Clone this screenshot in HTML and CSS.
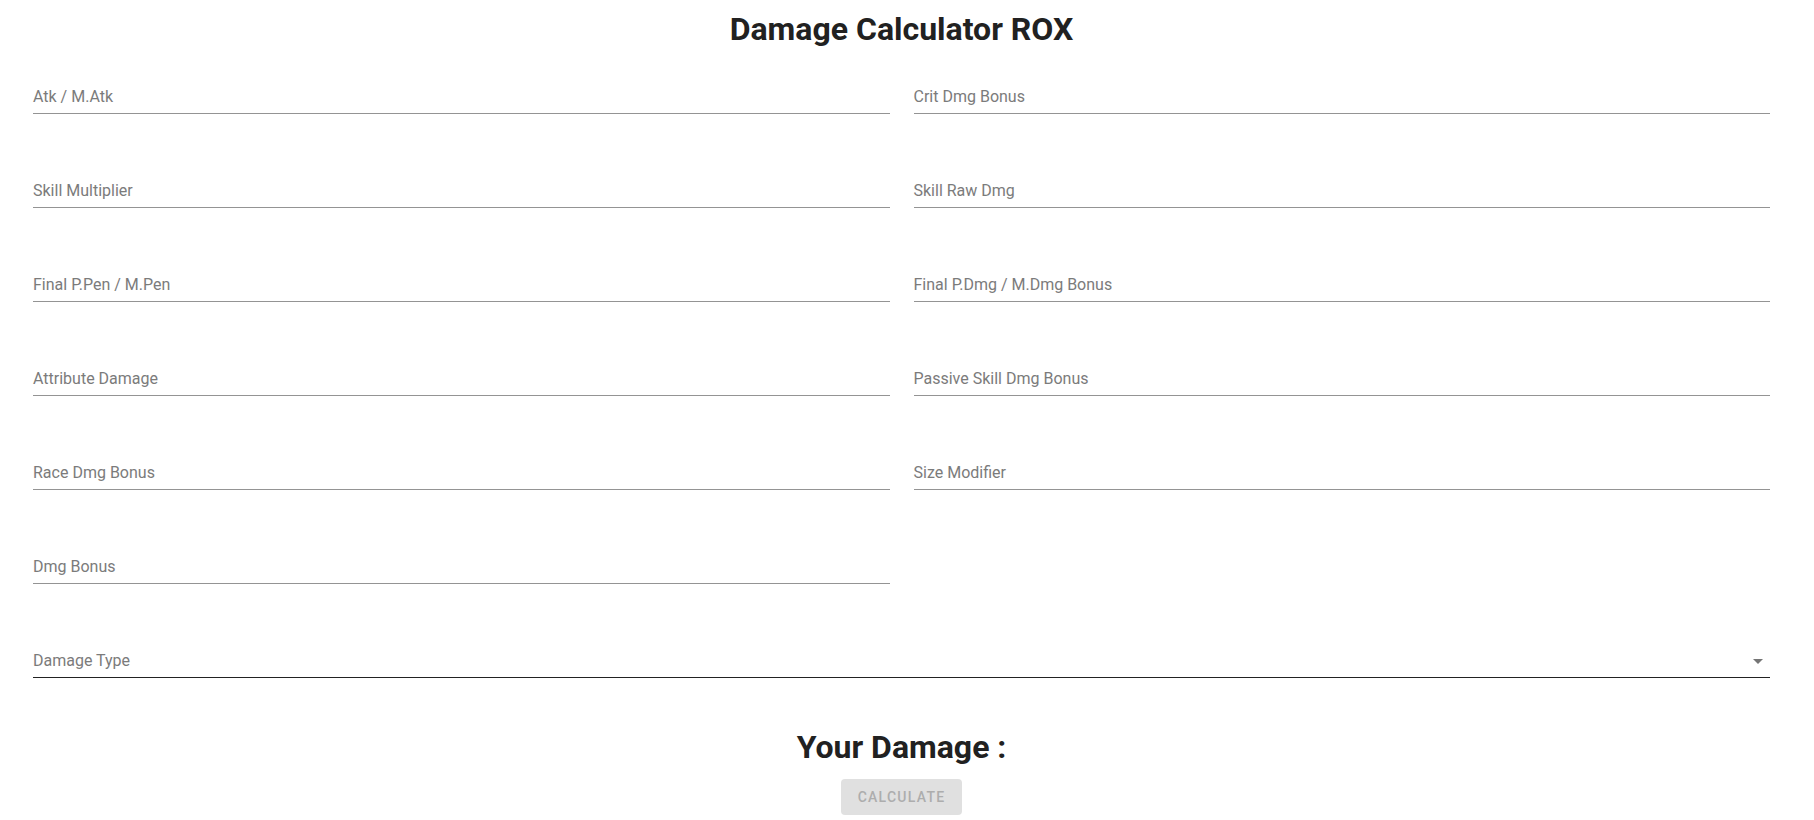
FILE: index.html
```html
<!DOCTYPE html>
<html lang="en">
<head>
    <meta charset="UTF-8">
    <meta name="viewport" content="width=device-width, initial-scale=1.0">
    <title>Damage Calculator ROX</title>
    <link rel="stylesheet" href="styles.css">
</head>
<body>

    <div class="calculator">
        <h1 class="title">Damage Calculator ROX</h1>

        <!-- Input fields -->
        <form class="field-grid" id="damageForm">
            <div class="field"><label>Atk / M.Atk</label></div>
            <div class="field"><label>Crit Dmg Bonus</label></div>
            <div class="field"><label>Skill Multiplier</label></div>
            <div class="field"><label>Skill Raw Dmg</label></div>
            <div class="field"><label>Final P.Pen / M.Pen</label></div>
            <div class="field"><label>Final P.Dmg / M.Dmg Bonus</label></div>
            <div class="field"><label>Attribute Damage</label></div>
            <div class="field"><label>Passive Skill Dmg Bonus</label></div>
            <div class="field"><label>Race Dmg Bonus</label></div>
            <div class="field"><label>Size Modifier</label></div>
            <div class="field"><label>Dmg Bonus</label></div>
            <div class="field-empty"></div>

            <!-- Damage type select -->
            <div class="field select-field">
                <label>Damage Type</label>
                <svg class="select-arrow" width="24" height="16" viewBox="0 4 24 16">
                    <path d="M7 10l5 5 5-5z" fill="#757575"></path>
                </svg>
            </div>
        </form>

        <div class="result">
            <h2 class="result-title">Your Damage :</h2>
            <button type="button" class="calc-button" disabled>Calculate</button>
        </div>
    </div>

</body>
</html>
```

FILE: styles.css
```css
/* General Page Styles */
body, html {
    margin: 0;
    background-color: #ffffff;
    font-family: Roboto, "Liberation Sans", sans-serif;
    color: #212121;
}

.calculator {
    padding: 10px 44px 0 33px;
}

.title {
    margin: 0;
    font-size: 32px;
    line-height: 38.4px;
    font-weight: 700;
    text-align: center;
}

/* Two column grid of fields */
.field-grid {
    display: grid;
    grid-template-columns: 1fr 1fr;
    column-gap: 24px;
    row-gap: 46px;
    margin-top: 17.6px;
}

.field {
    padding: 23px 0 8px 0;
    border-bottom: 1px solid #949494;
    font-size: 16px;
    line-height: 16px;
    color: #7b7b7b;
}

.field label {
    display: block;
}

/* Select spans both columns */
.select-field {
    grid-column: 1 / span 2;
    display: flex;
    justify-content: space-between;
    border-bottom-color: #222222;
}

.select-arrow {
    display: block;
}

/* Result section */
.result {
    display: flex;
    flex-direction: column;
    align-items: center;
    margin-top: 49.6px;
}

.result-title {
    margin: 0;
    font-size: 32px;
    line-height: 38.4px;
    font-weight: 700;
}

.calc-button {
    margin-top: 13px;
    height: 36px;
    padding: 0 17px;
    border: none;
    border-radius: 4px;
    background-color: #e0e0e0;
    color: #adadad;
    font-family: Roboto, "Liberation Sans", sans-serif;
    font-size: 14px;
    font-weight: 500;
    letter-spacing: 1.25px;
    text-transform: uppercase;
}
```
